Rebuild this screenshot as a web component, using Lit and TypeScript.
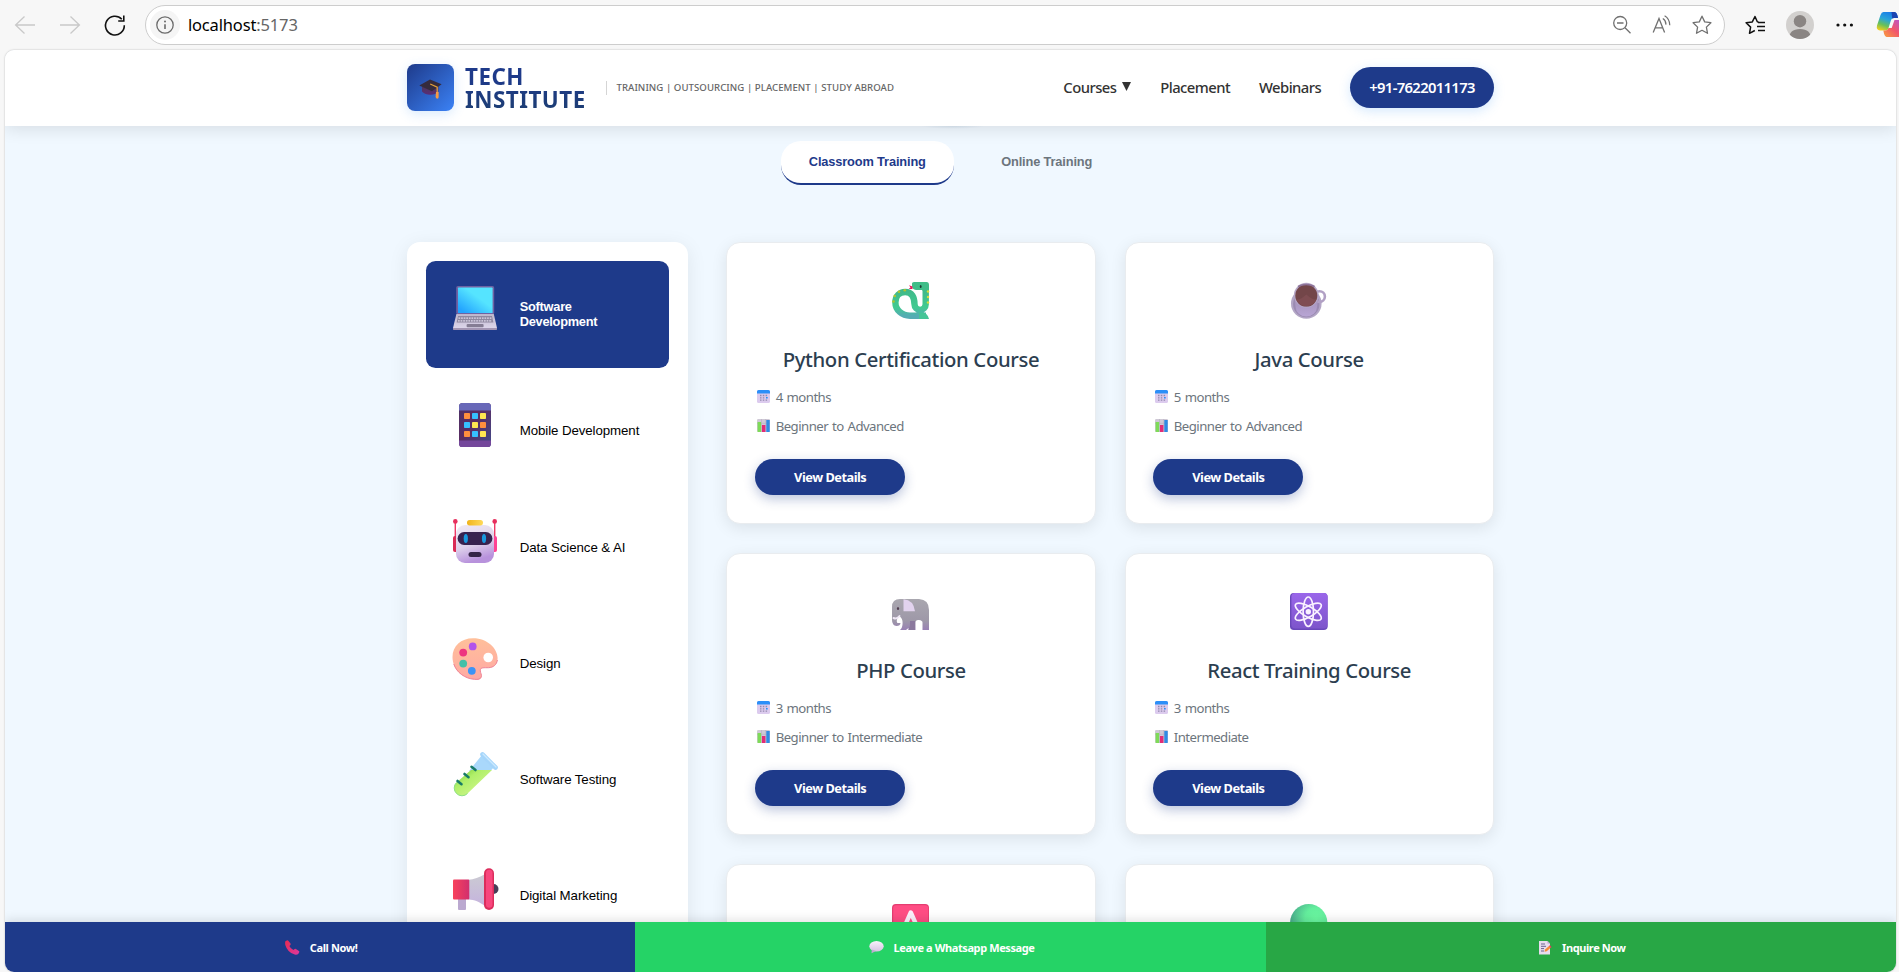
import { LitElement, html, css, svg } from "lit";
import { customElement, property } from "lit/decorators.js";
import { classMap } from "lit/directives/class-map.js";

const icon = (w: number, h: number, body: unknown) =>
  html`<svg width=${w} height=${h} viewBox="0 0 ${w} ${h}" fill="none">${body}</svg>`;

/* ---------- category icons, 44 x 44 ---------- */
const laptop = icon(44, 44, svg`
  <defs><linearGradient id="lp" x1="0" y1="1" x2="1" y2="0"><stop offset=".1" stop-color="#23a4ff"/><stop offset=".6" stop-color="#55e4ff"/></linearGradient>
  <linearGradient id="lb" x1="0" y1="0" x2="0" y2="1"><stop stop-color="#bdb6cc"/><stop offset="1" stop-color="#dcd5ea"/></linearGradient></defs>
  <rect x="3.2" y="0" width="38" height="28.5" rx="1.8" fill="#6f62a3"/>
  <rect x="5" y="1.6" width="34.6" height="25.4" rx=".6" fill="url(#lp)"/>
  <path d="M3.4 28h37.4L44 42H0z" fill="url(#lb)"/><path d="M0 42h44v1.3a.7.7 0 0 1-.7.7H.7a.7.7 0 0 1-.7-.7z" fill="#a295b3"/>
  <path d="M5 30h34l1.4 6.6H3.6z" fill="#8f88a0"/>
  <path d="M5.5 32.2h33M5 34.8h34" stroke="#dfd9ea" stroke-width="1.3" stroke-dasharray="1.7 .9"/>
  <rect x="13.6" y="38" width="17" height="3.2" rx="1" fill="#857d94"/>`);

const phone = icon(44, 44, svg`
  <defs><linearGradient id="ph" x1="0" y1="0" x2="1" y2="1"><stop stop-color="#4a3268"/><stop offset=".45" stop-color="#5b2c62"/><stop offset="1" stop-color="#404a8a"/></linearGradient></defs>
  <rect x="6" y="0" width="32" height="44" rx="3.6" fill="url(#ph)"/>
  <path d="M6 7.4V3.6A3.6 3.6 0 0 1 9.600 0h24.800A3.600 3.600 0 0 1 38 3.600v3.800z" fill="#6868b8"/>
  <path d="M6 37.600h32v2.800a3.600 3.600 0 0 1-3.600 3.600H9.600A3.600 3.600 0 0 1 6 40.400z" fill="#74479b"/>
  <g fill="#ff8f3e"><rect x="11" y="10" width="6" height="6" rx=".8"/><rect x="27" y="19" width="6" height="6" rx=".8"/><rect x="11" y="28" width="6" height="6" rx=".8"/></g>
  <g fill="#36c1ff"><rect x="19" y="10" width="6" height="6" rx=".8"/><rect x="11" y="19" width="6" height="6" rx=".8"/><rect x="19" y="28" width="6" height="6" rx=".8"/></g>
  <g fill="#ffe651"><rect x="27" y="10" width="6" height="6" rx=".8"/><rect x="19" y="19" width="6" height="6" rx=".8"/><rect x="27" y="28" width="6" height="6" rx=".8"/></g>`);

const robot = icon(44, 44, svg`
  <defs><linearGradient id="rb" x1="0" y1="0" x2=".3" y2="1"><stop stop-color="#f1ebf6"/><stop offset=".6" stop-color="#ddd0ea"/><stop offset="1" stop-color="#b892dc"/></linearGradient>
  <linearGradient id="ry" x1="0" y1="0" x2="1" y2="0"><stop stop-color="#f0b41c"/><stop offset="1" stop-color="#ffd95a"/></linearGradient></defs>
  <path d="M2.300 3v28M41.700 3v28" stroke="#ee3a67" stroke-width="1.400"/>
  <circle cx="2.300" cy="2.400" r="2.300" fill="#e72f5d"/><circle cx="41.700" cy="2.400" r="2.300" fill="#e72f5d"/>
  <rect x="0" y="17" width="5" height="16" rx="2" fill="#d92b55"/><rect x="39" y="17" width="5" height="16" rx="2" fill="#ff4394"/>
  <rect x="3" y="6" width="38" height="38" rx="9" fill="url(#rb)"/>
  <rect x="14" y="1" width="16" height="5.400" rx="2.600" fill="url(#ry)"/>
  <rect x="4.600" y="13" width="34.800" height="13" rx="6.500" fill="#37234f"/>
  <ellipse cx="12.800" cy="19.500" rx="2.100" ry="4.500" fill="#1998dd"/><ellipse cx="31" cy="19.500" rx="2.100" ry="4.500" fill="#1998dd"/>
  <rect x="15.500" y="33" width="13" height="5" rx="2.500" fill="#352547"/>`);

const palette = icon(44, 44, svg`
  <defs><linearGradient id="pl" x1=".3" y1="0" x2=".4" y2="1"><stop stop-color="#ffc09a"/><stop offset="1" stop-color="#ffa9a3"/></linearGradient></defs>
  <path d="M20 3.200C35 3.200 44.600 14 44.600 23c0 6-3.400 9.500-9 9.700-4.200.2-8.600-.8-8.300 3.200.2 2.400 1.600 3.500 1 6-.6 2.300-3.200 2.800-7 2.400C9 43.300-.5 34-.5 22-.5 11 8 3.200 20 3.200z" fill="url(#pl)"/>
  <path d="M44.400 25c-.8 4.800-4 7.500-8.800 7.700-4.200.2-8.600-.8-8.300 3.200.2 2.400 1.600 3.500 1 6-.6 2.300-3.200 2.800-7 2.400C12 43.600 3.500 37.500.8 29" stroke="#ee8296" stroke-width="1"/>
  <circle cx="35.200" cy="22.500" r="4.800" fill="#fff"/>
  <circle cx="19.700" cy="11.400" r="3.900" fill="#b253ea"/><circle cx="10.200" cy="17.600" r="3.900" fill="#ee3480"/>
  <circle cx="10.200" cy="28.600" r="3.900" fill="#42c0a8"/><circle cx="18.800" cy="35.800" r="3.900" fill="#3d93f5"/>`);

const tube = icon(44, 44, svg`
  <defs><linearGradient id="tb" x1="0" y1="0" x2=".7" y2=".7"><stop stop-color="#6cc52e"/><stop offset=".5" stop-color="#b0ef69"/><stop offset="1" stop-color="#c9f584"/></linearGradient></defs>
  <path d="M29 3 41 15 37.500 19H16z" fill="#a9d8fb"/>
  <path d="M18 18h21L14.500 41.500a7.700 7.700 0 0 1-11-11z" fill="url(#tb)"/>
  <path d="M3.500 30.500a7.700 7.700 0 0 0 11 11" stroke="#8fe083" stroke-width="1"/>
  <path d="M29.500 2.500 42.500 15.500" stroke="#a5d5fa" stroke-width="4.600" stroke-linecap="round"/><path d="M30 2 43 15" stroke="#cbe9ff" stroke-width="1.300" stroke-linecap="round"/>
  <path d="m18.500 14.800 4 3.200M11.500 22l4 3.200M4.500 29l4 3.200" stroke="#187b68" stroke-width="2.600" stroke-linecap="round"/>`);

const megaphone = icon(44, 44, svg`
  <defs><linearGradient id="mg" x1="0" y1="0" x2="1" y2="0"><stop stop-color="#f8425c"/><stop offset="1" stop-color="#d12f6e"/></linearGradient>
  <linearGradient id="mw" x1="0" y1="0" x2="0" y2="1"><stop stop-color="#cbcbd2"/><stop offset="1" stop-color="#c5b3de"/></linearGradient></defs>
  <rect x="5" y="30" width="8" height="12" rx="1" fill="#bba9d0"/>
  <circle cx="40.500" cy="21" r="5" fill="#473e58"/>
  <path d="M15.500 11.800c5 0 11-2.400 17-6v32.600c-6-4.800-11-6.800-17-7z" fill="url(#mw)"/>
  <rect x="0" y="11.500" width="16.300" height="20" rx="1" fill="url(#mg)"/>
  <rect x="31" y=".3" width="10" height="41.700" rx="5" fill="#db2d5c"/><rect x="33" y="1.800" width="6.500" height="38" rx="3.200" fill="#f8467d"/>`);

/* ---------- course icons, 38 x 38 ---------- */
const snake = icon(38, 38, svg`
  <defs><linearGradient id="sn" x1="0" y1="0" x2="0" y2="1"><stop stop-color="#40b588"/><stop offset=".7" stop-color="#41ca91"/><stop offset="1" stop-color="#55acb3"/></linearGradient></defs>
  <path d="M33.700 5v17.300a5.600 5.600 0 0 1-11.200 0c0-6.800-2.500-12.300-9.300-12.300-5.500 0-9.800 4-9.800 10.500C3.400 28 10 33.800 18 33.800h16" stroke="url(#sn)" stroke-width="6.400"/>
  <path d="M20 1.500Q20 0 22 0h12.500Q37 0 37 3v6h-6.500V8C24 8.300 20 8 20 4z" fill="#3fbd88"/>
  <path d="M27 30.600h4.500q3.700.6 5.500 6.400H27z" fill="#45c597"/>
  <path d="m17 3.200 3.500 1.300V7h-3.800l1.800-1.400z" fill="#e8195b"/>
  <ellipse cx="28.700" cy="4.500" rx=".9" ry="1.500" fill="#1d3a32"/>
  <g fill="#d9dc3e"><circle cx="36" cy="9.500" r="1.200"/><circle cx="36" cy="15" r="1.200"/><circle cx="36" cy="20.500" r="1.200"/></g>
  <g fill="#b0c42e"><circle cx="12.800" cy="8.200" r="1.300"/><circle cx="7" cy="9.800" r="1.300"/><circle cx="2.800" cy="14" r="1.300"/><circle cx="1.500" cy="19.500" r="1.300"/></g>`);

const coffee = icon(38, 38, svg`
  <defs><linearGradient id="cf" x1="0" y1="0" x2="0" y2="1"><stop stop-color="#a08fb5"/><stop offset="1" stop-color="#b8a5d4"/></linearGradient></defs>
  <circle cx="16.300" cy="21.500" r="15.300" fill="#b3a6c6"/><circle cx="16.300" cy="22" r="13.200" fill="#9b8bb2"/>
  <circle cx="29.500" cy="14.600" r="5.400" stroke="#b1a0c4" stroke-width="2.600"/>
  <path d="M4.300 13.500 5.600 25a10.700 9.500 0 0 0 21.400 0L28.300 13.500z" fill="url(#cf)"/>
  <circle cx="16.300" cy="13.200" r="12.400" fill="#b5a7c6"/><circle cx="16.300" cy="13.600" r="11" fill="#734649"/>
  <path d="M6 17a11 11 0 0 0 20.600 0Q24 19 16.300 12.500 9 19 6 17z" fill="#7f4d52"/><path d="M8 4.500q8-4 16.600 0" stroke="#8c7297" stroke-width="1.500"/>`);

const elephant = icon(38, 38, svg`
  <defs><linearGradient id="el" x1="0" y1="0" x2="0" y2="1"><stop stop-color="#a9a7af"/><stop offset=".7" stop-color="#9e98a8"/><stop offset="1" stop-color="#9880b4"/></linearGradient></defs>
  <path d="M0 14Q0 6 8 6h19q10 .5 10 11v20h-6.500v-7.500q0-2-3.500-2.500t-3.500 2.500V37H16.500v-2L14 37H8q2.600-2 2.600-7 0-5-3-6.500L5.500 25Q4 28.500 5.500 30h3q-.2 3-4 3Q0 32.500 0 27z" fill="url(#el)"/>
  <path d="M11.500 6.300q10 .6 11.500 12H11.500z" fill="#e2d3ee"/><path d="M1.500 25q3.500 1.400 6-2" stroke="#efe7f5" stroke-width="2" stroke-linecap="round"/>
  <path d="M16.500 37q2-4 1.500-9h5v9z" fill="#8b799d"/><ellipse cx="6" cy="15.500" rx="1.100" ry="1.600" fill="#513e50"/>`);

const atom = icon(38, 38, svg`
  <defs><linearGradient id="at" x1="0" y1="0" x2="0" y2="1"><stop stop-color="#9a66ea"/><stop offset="1" stop-color="#7d55cb"/></linearGradient></defs>
  <rect x="0" y="0" width="37.600" height="37" rx="3.800" fill="#6a48bb"/><rect x="1.400" y="0" width="36.200" height="35.600" rx="3.800" fill="url(#at)"/>
  <g stroke="#faf2ff" stroke-width="1.700"><ellipse cx="18.300" cy="18.700" rx="5.200" ry="14.700"/><ellipse cx="18.300" cy="18.700" rx="5.200" ry="14.700" transform="rotate(60 18.300 18.700)"/><ellipse cx="18.300" cy="18.700" rx="5.200" ry="14.700" transform="rotate(-60 18.300 18.700)"/></g>
  <circle cx="18.300" cy="18.700" r="2.700" fill="#faf2ff"/>`);

const letterA = icon(38, 38, svg`
  <rect x="0" y="0" width="37" height="37" rx="3.800" fill="#e53d71"/><rect x="1.200" y="1.200" width="35" height="35" rx="3" fill="#ff4d84"/>
  <path d="M9 30.500 18.800 8.500l9.800 22M12.700 23.500h12.200" stroke="#fbf0fb" stroke-width="4.400" stroke-linecap="round" stroke-linejoin="round"/>`);

const greenBall = icon(38, 38, svg`
  <defs><radialGradient id="gb" cx=".7" cy=".4" r=".75"><stop stop-color="#6bfaa1"/><stop offset=".4" stop-color="#64ee9d"/><stop offset="1" stop-color="#45a389"/></radialGradient></defs>
  <circle cx="18.700" cy="18.700" r="18.600" fill="url(#gb)"/>`);

/* ---------- small icons ---------- */
const calendar = icon(13, 13, svg`
  <rect width="13" height="13" rx="1.600" fill="#dccbee"/><path d="M0 3.600V1.600A1.600 1.600 0 0 1 1.600 0h9.800A1.600 1.600 0 0 1 13 1.600v2z" fill="#2c8ff8"/>
  <path d="M3 5.500h7.500M3 7.800h4.500M3 10.100h7.500" stroke="#938bad" stroke-width="1.300" stroke-dasharray="1.500 1.300"/><path d="M9 7.800h1.700" stroke="#2c8ff8" stroke-width="1.600"/>`);
const chart = icon(13, 13, svg`
  <rect width="13" height="13" rx="1.300" fill="#cfc9d6"/><path d="M0 4.300h13M4.500 0v13M8.700 0v13" stroke="#b7afc1" stroke-width=".6"/>
  <rect x=".6" y="3" width="3.500" height="10" fill="#7edb58"/><rect x="5" y="6" width="3.400" height="7" fill="#e22c77"/><rect x="9.300" y="1" width="3.400" height="12" fill="#2f8be4"/>`);
const handset = icon(15, 15, svg`
  <defs><linearGradient id="hs" x1="0" y1="0" x2="1" y2="1"><stop stop-color="#e92c50"/><stop offset="1" stop-color="#dc38a0"/></linearGradient></defs>
  <path d="M.4 1.200 2.300.3q.7 0 1.200.7l2 2.600q.4.700-.1 1.300l-1 1.200q1 2.500 4 4l1.300-1.100q.6-.4 1.200 0l3 1.900q.8.600.3 1.400l-1 1.700q-1 .9-3.500.6Q2.500 12.500.3 5q-.4-2.500.1-3.800z" fill="url(#hs)"/>`);
const bubble = icon(15, 13, svg`
  <defs><linearGradient id="bb" x1="0" y1="0" x2="0" y2="1"><stop stop-color="#f7f1fb"/><stop offset="1" stop-color="#d5c4e3"/></linearGradient></defs>
  <ellipse cx="7.500" cy="5.300" rx="7.200" ry="5.200" fill="url(#bb)"/><path d="M2.800 8.500 2.500 12.300 7 10z" fill="#bfabd2"/>`);
const memo = icon(14, 15, svg`
  <path d="M1 1h8.500L12 3.600V14.500H1z" fill="#e6dcee"/><path d="M9.500 1v2.600H12z" fill="#b49fc9"/>
  <path d="M3 4h4M3 6.300h5M3 8.600h3M3 11h3" stroke="#6c6390" stroke-width="1"/>
  <path d="m6.500 11.800.6-2.200 4.200-3.800 1.600 1.700-4.200 3.800z" fill="#f78b35"/><path d="m11 6.100 1-.9 1.600 1.700-.9.900z" fill="#e93364"/>`);
const gradCap = icon(23, 20, svg`
  <defs><linearGradient id="gc" x1="0" y1="0" x2="0" y2="1"><stop stop-color="#4b3a5b"/><stop offset="1" stop-color="#5a2c78"/></linearGradient></defs>
  <path d="M3 8v4.500q3.500 3.500 8.500 3.300 5 .1 8-3.300V7z" fill="url(#gc)"/><path d="M.3 6.500 11 .4l11.600 4.800-9.600 7z" fill="#352b3c"/>
  <path d="m11.200 5 7 3.200V15" stroke="#e0a03a" stroke-width="1.300"/><path d="M17 13h2.600v5.300q0 1.400-1.300 1.400T16.600 18z" fill="#f79a45"/>`);

@customElement("category-item")
class CategoryItem extends LitElement {
  @property() label = "";
  @property({ attribute: false }) glyph: unknown;
  @property({ type: Boolean, reflect: true }) active = false;
  static styles = css`
    :host { display: flex; align-items: center; box-sizing: border-box; height: 106.700px; padding: 0 27px; gap: 22.500px; border-radius: 9.600px; font: 400 13.300px/15px "Liberation Sans", Arial, sans-serif; letter-spacing: -.09px; color: #000; }
    :host([active]) { background: #1e3a8a; color: #fff; font-weight: 700; font-size: 12.800px; letter-spacing: -.25px; }
    .glyph { flex: none; width: 44px; height: 44px; margin-bottom: 12px; }
    svg { display: block; overflow: visible; }
    .label { flex: 1; white-space: nowrap; }
    :host([active]) .label { white-space: normal; flex: 0 0 90px; }
  `;
  render() {
    return html`<div class="glyph">${this.glyph}</div><div class="label">${this.label}</div>`;
  }
}

@customElement("course-card")
class CourseCard extends LitElement {
  @property() name = "";
  @property() duration = "";
  @property() level = "";
  @property({ attribute: false }) glyph: unknown;
  static styles = css`
    :host { display: flex; flex-direction: column; box-sizing: border-box; height: 282.300px; padding: 39px 28px 0 27.700px; background: #fff; border: 1px solid #e9ecef; border-radius: 14px; box-shadow: 0 4px 16px rgba(0,0,0,.09); font-family: "Noto Sans", "Segoe UI", sans-serif; }
    .glyph { height: 38px; align-self: center; }
    svg { display: block; }
    h3 { margin: 24.500px 0 14px; font-size: 20.300px; line-height: 28px; font-weight: 500; letter-spacing: -.36px; color: #2c3e50; text-align: center; }
    .meta { display: flex; align-items: center; gap: 6px; height: 20px; margin-bottom: 9px; padding-left: 1.500px; font-size: 13.200px; letter-spacing: -.54px; word-spacing: 1px; color: #6c757d; }
    button { align-self: flex-start; width: 150px; height: 36.800px; margin-top: 14px; padding: 0; border: 0; border-radius: 20px; background: #1e3a8a; color: #fff; font: 700 12.800px "Noto Sans", sans-serif; letter-spacing: -.5px; box-shadow: 0 4px 12px rgba(30,58,138,.3); }
  `;
  render() {
    return html`<div class="glyph">${this.glyph}</div>
      ${this.name
        ? html`<h3>${this.name}</h3>
            <div class="meta">${calendar}<span>${this.duration}</span></div>
            <div class="meta">${chart}<span>${this.level}</span></div>
            <button>View Details</button>`
        : ""}`;
  }
}

const starPath = "M10 1.200 12.700 6.900 18.900 7.700 14.400 12.100 15.500 18.300 10 15.300 4.500 18.300 5.600 12.100 1.100 7.700 7.300 6.900z";

@customElement("browser-bar")
class BrowserBar extends LitElement {
  static styles = css`
    :host { display: flex; align-items: center; height: 49.500px; box-sizing: border-box; padding-left: 13px; overflow: hidden; background: #f7f7f7; }
    svg { display: block; flex: none; }
    .nav { display: flex; flex: none; gap: 21px; }
    .address { display: flex; flex: none; align-items: center; box-sizing: border-box; width: 1579.500px; height: 39.500px; margin-left: 18.400px; padding: 0 12px 0 4px; border: 1px solid #cdcdcd; border-radius: 20px; background: #fff; }
    .info { display: grid; place-items: center; width: 30px; height: 30px; border-radius: 50%; background: #f5f5f5; }
    .url { flex: 1; margin-left: 7.500px; font: 400 16.500px "Noto Sans", "Segoe UI", sans-serif; letter-spacing: -.15px; color: #000; }
    .port { color: #666; }
    .tools { display: flex; align-items: center; gap: 20px; }
    .actions { display: flex; flex: none; align-items: center; margin-left: 20px; gap: 21px; }
  `;
  render() {
    return html`
      <div class="nav">
        ${icon(24, 24, svg`<path d="M22 12H2.600M11.500 3.500 2.600 12l8.900 8.500" stroke="#c9c9c9" stroke-width="1.300"/>`)}
        ${icon(24, 24, svg`<path d="M2 12h19.400M12.500 3.500 21.400 12l-8.900 8.500" stroke="#c9c9c9" stroke-width="1.300"/>`)}
        ${icon(24, 24, svg`<path d="M21.300 12.300A9.400 9.400 0 1 1 18.800 6.200M20.800 2.500V8h-5.600" stroke="#111" stroke-width="1.600"/>`)}
      </div>
      <div class="address">
        <div class="info">${icon(18, 18, svg`<circle cx="9" cy="9" r="8.200" stroke="#6b6b6b" stroke-width="1.300"/><path d="M9 8.200v4.800" stroke="#6b6b6b" stroke-width="1.600"/><circle cx="9" cy="5.600" r="1" fill="#6b6b6b"/>`)}</div>
        <div class="url">localhost<span class="port">:5173</span></div>
        <div class="tools">
          ${icon(20, 20, svg`<circle cx="8.200" cy="8" r="6.500" stroke="#707070" stroke-width="1.300"/><path d="M5 8h6.500M13 12.800l5.500 5.400" stroke="#707070" stroke-width="1.300"/>`)}
          ${icon(20, 20, svg`<path d="M1.200 17.600 7 3.400l5.600 14.200M3.200 12.800h7.600" stroke="#707070" stroke-width="1.300"/><path d="M10.800 3.600q3 1.700 3.200 6M12.600.8q5 3 5.200 9.400" stroke="#707070" stroke-width="1.200"/>`)}
          ${icon(20, 20, svg`<path d=${starPath} stroke="#707070" stroke-width="1.300" stroke-linejoin="round"/>`)}
        </div>
      </div>
      <div class="actions">
        ${icon(20, 20, svg`<path d="M13.500 6.900 12.300 6.700 10 1.500 7.300 6.900 1.100 7.700 5.600 12.100 4.500 18.300 9.800 15.500" stroke="#111" stroke-width="1.500" stroke-linejoin="round"/><path d="M13 7.500h7M12 11.500h8M13 15.500h7" stroke="#111" stroke-width="1.500"/>`)}
        ${icon(28, 28, svg`<defs><clipPath id="av"><circle cx="14" cy="14" r="14"/></clipPath></defs><g clip-path="url(#av)"><rect width="28" height="28" fill="#d2d0ce"/><circle cx="14" cy="10.200" r="6.200" fill="#8a8583"/><path d="M3 28q0-10 11-10t11 10z" fill="#8a8583"/></g>`)}
        ${icon(20, 20, svg`<g fill="#111"><circle cx="3" cy="10" r="1.600"/><circle cx="9.700" cy="10" r="1.600"/><circle cx="16.400" cy="10" r="1.600"/></g>`)}
        ${icon(27, 27, svg`<defs><linearGradient id="c1" x1=".6" y1="0" x2=".2" y2="1"><stop stop-color="#1a7de8"/><stop offset=".4" stop-color="#2aa6d8"/><stop offset=".7" stop-color="#68c05a"/><stop offset="1" stop-color="#f2cf1c"/></linearGradient><linearGradient id="c2" x1="0" y1="1" x2="1" y2="0"><stop stop-color="#f9a13c"/><stop offset=".5" stop-color="#f2566b"/><stop offset="1" stop-color="#b353d8"/></linearGradient></defs>
          <path d="M7.500 1H18q2.500 0 3.500 4l.5 2h-4q-2.500 0-3.300 3L12.500 17q-.8 2.500-3 2.500H4q-4-.5-3-5L4.500 4Q5.500 1 7.500 1z" fill="url(#c1)"/><path d="M15.500 1h3q2 0 3 3.600L22 7h-4q-1 0-1.800.6z" fill="#1b44b1"/>
          <path d="M26 9v17H10.500q-1.500 0-2.400-3L7.300 19.500h2.200q2 0 3-2.500h3.200L18.500 9z" fill="url(#c2)"/>`)}
      </div>`;
  }
}

const categories = [
  { label: "Software Development", glyph: laptop },
  { label: "Mobile Development", glyph: phone },
  { label: "Data Science & AI", glyph: robot },
  { label: "Design", glyph: palette },
  { label: "Software Testing", glyph: tube },
  { label: "Digital Marketing", glyph: megaphone },
];

const courses = [
  { name: "Python Certification Course", duration: "4 months", level: "Beginner to Advanced", glyph: snake },
  { name: "Java Course", duration: "5 months", level: "Beginner to Advanced", glyph: coffee },
  { name: "PHP Course", duration: "3 months", level: "Beginner to Intermediate", glyph: elephant },
  { name: "React Training Course", duration: "3 months", level: "Intermediate", glyph: atom },
  { name: "", duration: "", level: "", glyph: letterA },
  { name: "", duration: "", level: "", glyph: greenBall },
];

@customElement("app-root")
class AppRoot extends LitElement {
  static styles = css`
    :host { display: flex; flex-direction: column; height: 972px; overflow: hidden; background: #f7f7f7; font-family: "Noto Sans", "Segoe UI", sans-serif; }
    svg { display: block; }
    .page { flex: 1; min-height: 0; display: flex; flex-direction: column; margin: 0 3px 0 5px; border-radius: 9px; overflow: hidden; background: #f0f8ff; box-shadow: 0 0 2px rgba(0,0,0,.28); }
    header { flex: none; position: relative; z-index: 1; height: 76.500px; background: #fff; box-shadow: 0 3px 16px rgba(0,0,0,.11); }
    .wrap { width: 1087px; margin: 0 auto; }
    .bar { display: flex; align-items: center; height: 100%; }
    .logo { display: grid; place-items: center; width: 47px; height: 47px; padding-top: 3px; box-sizing: border-box; border-radius: 8px; background: linear-gradient(135deg, #1e3a8a, #3b82f6); box-shadow: 0 3px 12px rgba(59,150,246,.2); }
    .brand { width: 121px; margin-left: 11px; font-size: 22.400px; line-height: 23px; font-weight: 700; letter-spacing: .5px; background: linear-gradient(180deg, #1e3a8a 30%, #1d3e73); background-clip: text; -webkit-background-clip: text; color: transparent; }
    .tagline { margin-left: 19.500px; padding-left: 10px; border-left: 1px solid #d5d5d5; font-size: 9.600px; line-height: 14px; font-weight: 500; letter-spacing: .06px; color: #666; white-space: nowrap; }
    nav { display: flex; align-items: center; gap: 28.800px; margin-left: auto; font-size: 14.800px; line-height: 20px; font-weight: 500; letter-spacing: -.53px; color: #333; }
    .link { display: flex; align-items: center; gap: 6px; padding-bottom: 1.500px; }
    .call { display: grid; place-items: center; box-sizing: border-box; width: 144px; height: 41px; padding-bottom: 1px; border-radius: 20.500px; background: #1e3a8a; color: #fff; font-weight: 600; letter-spacing: -.66px; box-shadow: 0 3px 12px rgba(59,150,246,.22); }
    main { flex: 1; min-height: 0; overflow: hidden; padding-top: 14.800px; background: radial-gradient(ellipse 32px 3px at 948px 0, rgba(30,80,138,.1), transparent); }
    .tabs { display: flex; justify-content: center; gap: 19px; height: 44px; margin-bottom: 57.300px; }
    .tab { box-sizing: border-box; padding: 0 28.200px; border-bottom: 2px solid transparent; border-radius: 20px; font: 700 12.800px/41px "Liberation Sans", Arial, sans-serif; letter-spacing: -.14px; color: #6c757d; }
    .tab.on { background: #fff; border-color: #1e3a8a; color: #1e3a8a; }
    .content { display: flex; align-items: flex-start; gap: 38.200px; }
    aside { flex: none; width: 281.300px; height: 900px; box-sizing: border-box; padding: 19px 19.200px; display: flex; flex-direction: column; gap: 9.600px; border-radius: 13px; background: #fff; box-shadow: 0 4px 20px rgba(0,0,0,.08); }
    .grid { flex: 1; display: grid; grid-template-columns: 1fr 1fr; gap: 28.800px; }
    footer { flex: none; position: relative; z-index: 1; display: grid; grid-template-columns: repeat(3, 1fr); height: 50px; box-shadow: 0 -2px 10px rgba(0,0,0,.12); }
    .cta { display: flex; align-items: center; justify-content: center; gap: 10px; padding-left: 2px; color: #fff; font-size: 11px; font-weight: 700; letter-spacing: -.4px; }
    .phone { background: #1e3a8a; }
    .whatsapp { background: #25d366; }
    .inquire { background: #28a745; }
  `;
  render() {
    return html`
      <browser-bar></browser-bar>
      <div class="page">
        <header><div class="wrap bar">
          <div class="logo">${gradCap}</div>
          <div class="brand">TECH INSTITUTE</div>
          <div class="tagline">TRAINING | OUTSOURCING | PLACEMENT | STUDY ABROAD</div>
          <nav>
            <span class="link">Courses ${icon(9, 10, svg`<path d="M0 0h9L4.500 9z" fill="#333"/>`)}</span>
            <span class="link">Placement</span><span class="link">Webinars</span><span class="call">+91-7622011173</span>
          </nav>
        </div></header>
        <main>
          <div class="tabs">
            ${["Classroom Training", "Online Training"].map((t, i) => html`<div class=${classMap({ tab: true, on: i === 0 })}>${t}</div>`)}
          </div>
          <div class="wrap content">
            <aside>${categories.map((c, i) => html`<category-item .label=${c.label} .glyph=${c.glyph} ?active=${i === 0}></category-item>`)}</aside>
            <div class="grid">${courses.map((c) => html`<course-card .name=${c.name} .duration=${c.duration} .level=${c.level} .glyph=${c.glyph}></course-card>`)}</div>
          </div>
        </main>
        <footer>
          <div class="cta phone">${handset}Call Now!</div>
          <div class="cta whatsapp">${bubble}Leave a Whatsapp Message</div>
          <div class="cta inquire">${memo}Inquire Now</div>
        </footer>
      </div>`;
  }
}
